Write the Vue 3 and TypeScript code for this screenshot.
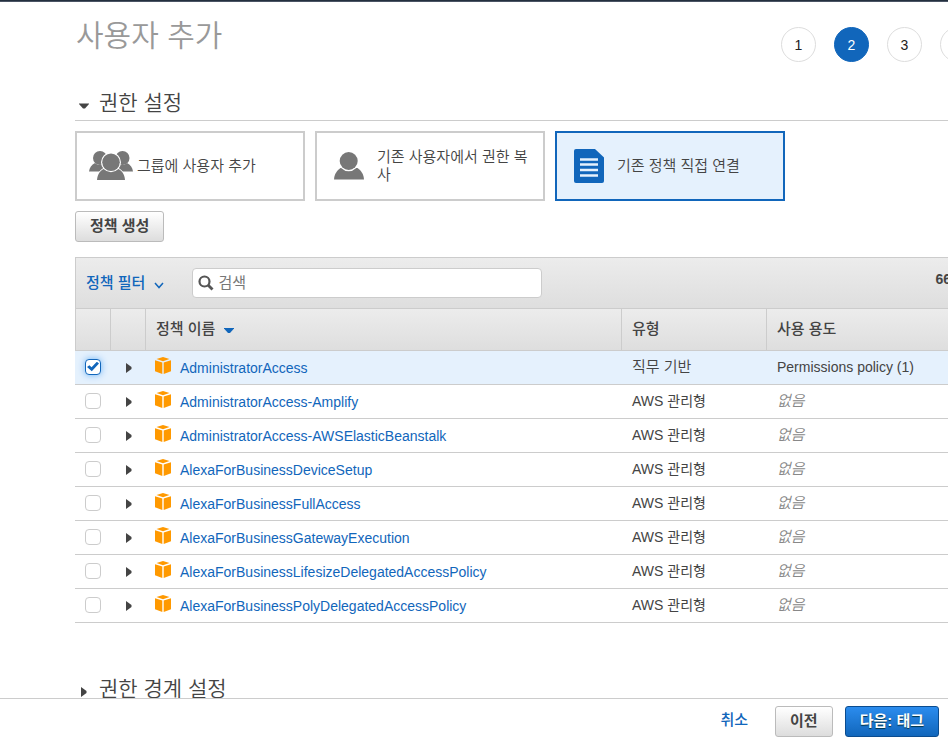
<script setup lang="ts">
import { ref } from 'vue'

interface Policy {
  name: string
  type: string
  usage: string
  checked: boolean
}

const managed = (name: string): Policy => ({ name, type: 'AWS 관리형', usage: '', checked: false })

const policies = ref<Policy[]>([
  { name: 'AdministratorAccess', type: '직무 기반', usage: 'Permissions policy (1)', checked: true },
  managed('AdministratorAccess-Amplify'),
  managed('AdministratorAccess-AWSElasticBeanstalk'),
  managed('AlexaForBusinessDeviceSetup'),
  managed('AlexaForBusinessFullAccess'),
  managed('AlexaForBusinessGatewayExecution'),
  managed('AlexaForBusinessLifesizeDelegatedAccessPolicy'),
  managed('AlexaForBusinessPolyDelegatedAccessPolicy'),
])

const search = ref('')
const currentStep = 2
const method = ref('attach')
</script>

<template>
  <div class="page">
    <div class="topbar"></div>
    <main class="content">
      <header class="head">
        <h1>사용자 추가</h1>
        <ol class="steps">
          <li v-for="n in 4" :key="n" :class="{ current: n === currentStep }">{{ n }}</li>
        </ol>
      </header>

      <h2 class="section ruled">
        <button type="button" class="toggle">
          <svg class="caret" width="10" height="10" viewBox="0 0 10 10"><path d="M0 2.500h10v.5L6 7.500H4L0 3z" fill="#444" /></svg>
          권한 설정
        </button>
      </h2>

      <div class="cards">
        <button type="button" class="card group" :class="{ selected: method === 'group' }" @click="method = 'group'">
          <svg width="44" height="30" viewBox="0 0 44 30" fill="#777">
            <circle cx="11" cy="7" r="7" />
            <circle cx="33.500" cy="7" r="7" />
            <path d="M0 20.500C.5 16.500 2.500 14 6 12c3 2.500 6 2.500 9 1.500l3 7z" />
            <path d="M44 20.500c-.5-4-2.500-6.500-6-8.500-3 2.500-6 2.500-9 1.500l-3 7z" />
            <path d="M8 29c.5-6 3-9 6.500-11h15c3.500 2 6 5 6.500 11z" stroke="#fff" stroke-width="2" paint-order="stroke" />
            <circle cx="22" cy="11.300" r="8.800" stroke="#fff" stroke-width="2.400" paint-order="stroke" />
          </svg>
          <span>그룹에 사용자 추가</span>
        </button>
        <button type="button" class="card" :class="{ selected: method === 'copy' }" @click="method = 'copy'">
          <svg width="30" height="28" viewBox="0 0 30 28" fill="#777">
            <path d="M0 27.500c.3-5.500 3-9 6.500-11.500h17c3.500 2.500 6.200 6 6.500 11.500z" />
            <circle cx="14.700" cy="9" r="9" stroke="#fff" stroke-width="2.600" paint-order="stroke" />
          </svg>
          <span>기존 사용자에서 권한 복사</span>
        </button>
        <button type="button" class="card" :class="{ selected: method === 'attach' }" @click="method = 'attach'">
          <svg width="30" height="34" viewBox="0 0 30 34">
            <path d="M2 0h19l9 8.500V32a2 2 0 0 1-2 2H2a2 2 0 0 1-2-2V2a2 2 0 0 1 2-2z" fill="#1166bb" />
            <path d="M6 10.500h18M6 15.500h18M6 21h18M6 26.500h18" stroke="#e5f1fd" stroke-width="2.500" />
          </svg>
          <span>기존 정책 직접 연결</span>
        </button>
      </div>

      <button type="button" class="btn create">정책 생성</button>

      <section class="panel">
        <div class="toolbar">
          <button type="button" class="filter">
            정책 필터
            <svg width="10" height="7" viewBox="0 0 10 7"><path d="M1 1l4 4.500L9 1" fill="none" stroke="#1166bb" stroke-width="1.500" /></svg>
          </button>
          <label class="search">
            <svg width="16" height="16" viewBox="0 0 16 16" fill="none" stroke="#555">
              <circle cx="6.500" cy="6.500" r="5" stroke-width="2.200" />
              <path d="M10 10l4.500 4.500" stroke-width="2.800" />
            </svg>
            <input v-model="search" type="text" placeholder="검색" aria-label="검색" />
          </label>
          <span class="count">66</span>
        </div>

        <table>
          <colgroup>
            <col class="c-check" />
            <col class="c-arrow" />
            <col />
            <col class="c-type" />
            <col class="c-usage" />
          </colgroup>
          <thead>
            <tr>
              <th></th>
              <th></th>
              <th>
                정책 이름
                <svg class="sort" width="10" height="6" viewBox="0 0 10 6"><path d="M0 0h10v.5L6 5H4L0 .5z" fill="#1166bb" /></svg>
              </th>
              <th>유형</th>
              <th>사용 용도</th>
            </tr>
          </thead>
          <tbody>
            <tr v-for="p in policies" :key="p.name" :class="{ active: p.checked }">
              <td class="mid"><input v-model="p.checked" type="checkbox" :aria-label="p.name" /></td>
              <td class="mid">
                <button type="button" class="expand" :aria-label="p.name">
                  <svg width="6" height="10" viewBox="0 0 6 10"><path d="M0 0l5.500 4v2L0 10z" fill="#444" /></svg>
                </button>
              </td>
              <td class="policy">
                <div class="name">
                  <svg width="16" height="17" viewBox="0 0 16 17" fill="#ff9900">
                    <path d="M8 0l6.500 2L8 4.200 1.500 2z" />
                    <path d="M0 3.200l7.300 2.300V17L0 14.300z" />
                    <path d="M16 3.200L8.700 5.500V17l7.300-2.700z" />
                  </svg>
                  <a href="#">{{ p.name }}</a>
                </div>
              </td>
              <td :class="{ korean: !p.type.startsWith('AWS') }">{{ p.type }}</td>
              <td><template v-if="p.usage">{{ p.usage }}</template><em v-else>없음</em></td>
            </tr>
          </tbody>
        </table>
      </section>

      <h2 class="section boundary">
        <button type="button" class="toggle">
          <svg class="caret" width="10" height="10" viewBox="0 0 10 10"><path d="M2 0l5.500 4v2L2 10z" fill="#444" /></svg>
          권한 경계 설정
        </button>
      </h2>
    </main>

    <footer class="footer">
      <a href="#" class="cancel">취소</a>
      <button type="button" class="btn">이전</button>
      <button type="button" class="btn primary">다음: 태그</button>
    </footer>
  </div>
</template>

<style>
body {
  margin: 0;
  background: #fff;
}
</style>

<style scoped>
.page {
  display: flex;
  flex-direction: column;
  height: 100vh;
  overflow: hidden;
  color: #444;
  font-family: "Liberation Sans", "Noto Sans CJK KR", sans-serif;
  font-size: 14px;
  line-height: 18px;
}
*,
*::before {
  box-sizing: border-box;
}
button,
input {
  font: inherit;
  color: inherit;
}
button {
  padding: 0;
  border: 0;
  background: none;
  cursor: pointer;
}
a,
.filter {
  color: #1166bb;
  text-decoration: none;
}
svg {
  flex: none;
}
.topbar {
  flex: none;
  height: 2px;
  background: #232f3e;
  border-bottom: 1px solid #4a5464;
}
.content {
  flex: 1;
  min-height: 0;
  overflow: hidden;
  padding-left: 75px;
}
.head {
  display: flex;
  justify-content: space-between;
  align-items: flex-start;
  height: 84px;
}
h1 {
  margin: 14px 0 0 1px;
  font-size: 30px;
  line-height: 40px;
  font-weight: 350;
  color: #999;
}
.steps {
  display: flex;
  gap: 18px;
  margin: 25px -27px 0 0;
  padding: 0;
  list-style: none;
}
.steps li {
  width: 35px;
  height: 35px;
  border: 1px solid #ddd;
  border-radius: 50%;
  line-height: 34px;
  text-align: center;
  color: #222;
}
.steps .current {
  border-color: #1166bb;
  background: #1166bb;
  color: #fff;
}
.section {
  margin: 0;
  font-size: 21px;
  line-height: 34px;
  font-weight: 350;
}
.ruled {
  border-bottom: 1px solid #ccc;
}
.toggle {
  display: flex;
  align-items: center;
  gap: 10px;
  padding-left: 4px;
}
.caret {
  margin-top: 5px;
}
.cards {
  display: flex;
  gap: 10px;
  padding: 10px 0;
}
.card {
  display: flex;
  align-items: center;
  gap: 13px;
  width: 230px;
  height: 70px;
  padding: 0 12px 0 17px;
  border: 2px solid #ccc;
  background: #fff;
  font-size: 15px;
  font-weight: 350;
  text-align: left;
}
.group {
  gap: 4px;
  padding-left: 12px;
}
.selected {
  border-color: #1166bb;
  background: #e5f1fd;
}
.btn {
  height: 31px;
  padding: 0 14px 2px;
  border: 1px solid #bbb;
  border-radius: 3px;
  background: linear-gradient(#fff, #ddd);
  font-size: 15px;
  font-weight: 700;
}
.create {
  display: block;
}
.panel {
  margin-top: 15px;
}
.toolbar {
  display: flex;
  align-items: center;
  height: 51px;
  padding-left: 10px;
  border: 1px solid #ccc;
  border-width: 1px 0 0 1px;
  background: linear-gradient(#ececec, #dedede);
}
.filter {
  display: flex;
  align-items: center;
  gap: 9px;
  font-size: 15px;
  font-weight: 500;
}
.filter svg {
  margin-top: 4px;
}
.search {
  display: flex;
  align-items: center;
  gap: 4px;
  width: 350px;
  height: 30px;
  margin-left: 28px;
  padding-left: 5px;
  border: 1px solid #ccc;
  border-radius: 4px;
  background: #fff;
}
.search input {
  flex: 1;
  min-width: 0;
  padding: 0;
  border: 0;
  outline: 0;
  background: transparent;
  font-size: 15px;
}
.search input::placeholder {
  color: #777;
}
.count {
  margin: 0 -3px 8px auto;
  font-weight: 700;
}
table {
  width: 100%;
  table-layout: fixed;
  border-spacing: 0;
}
.c-check {
  width: 36px;
}
.c-arrow {
  width: 35px;
}
.c-type {
  width: 145px;
}
.c-usage {
  width: 181px;
}
th {
  height: 43px;
  padding: 0 10px 2px;
  border: 1px solid #ccc;
  border-left: 0;
  background: linear-gradient(#ececec, #dedede);
  font-size: 15px;
  font-weight: 500;
  text-align: left;
}
th:first-child {
  border-left: 1px solid #ccc;
}
th:last-child {
  border-right: 0;
}
.sort {
  margin-left: 4px;
}
td {
  height: 34px;
  padding: 0 10px 2px;
  border-bottom: 1px solid #ccc;
  white-space: nowrap;
}
.mid {
  padding: 0 0 2px;
  text-align: center;
}
.policy {
  padding-left: 9px;
}
.active td {
  background: #e5f1fd;
}
.korean,
em {
  font-size: 15px;
  font-weight: 350;
}
em {
  color: #888;
}
.name {
  display: flex;
  align-items: center;
  gap: 9px;
}
.name svg {
  margin-bottom: 3px;
}
.name a {
  margin-top: 2px;
}
.expand {
  display: block;
  margin: 2px auto 0;
}
.expand svg {
  display: block;
}
td input {
  display: block;
  position: relative;
  appearance: none;
  width: 16px;
  height: 16px;
  margin: 0 auto;
  border: 1px solid #ccc;
  border-radius: 4px;
  background: #fff;
}
td input:checked {
  border-color: #1166bb;
  box-shadow: 0 0 7px #6db3f5;
}
td input:checked::before {
  content: "";
  position: absolute;
  inset: 2px 1px;
  background: #1166bb;
  clip-path: polygon(0 55%, 20% 37%, 38% 57%, 82% 3%, 100% 20%, 40% 98%);
}
.boundary {
  margin-top: 49px;
}
.footer {
  flex: none;
  display: flex;
  justify-content: flex-end;
  align-items: flex-start;
  gap: 12px;
  height: 42px;
  padding: 7px 9px 0 0;
  border-top: 1px solid #ccc;
  background: #fff;
}
.cancel {
  margin: 5px 15px 0 0;
  font-size: 15px;
  font-weight: 500;
}
.primary {
  border-color: #0b4c8f;
  background: linear-gradient(#2b8cee, #1166bb);
  color: #fff;
  text-shadow: 0 1px 1px #034;
}
</style>
